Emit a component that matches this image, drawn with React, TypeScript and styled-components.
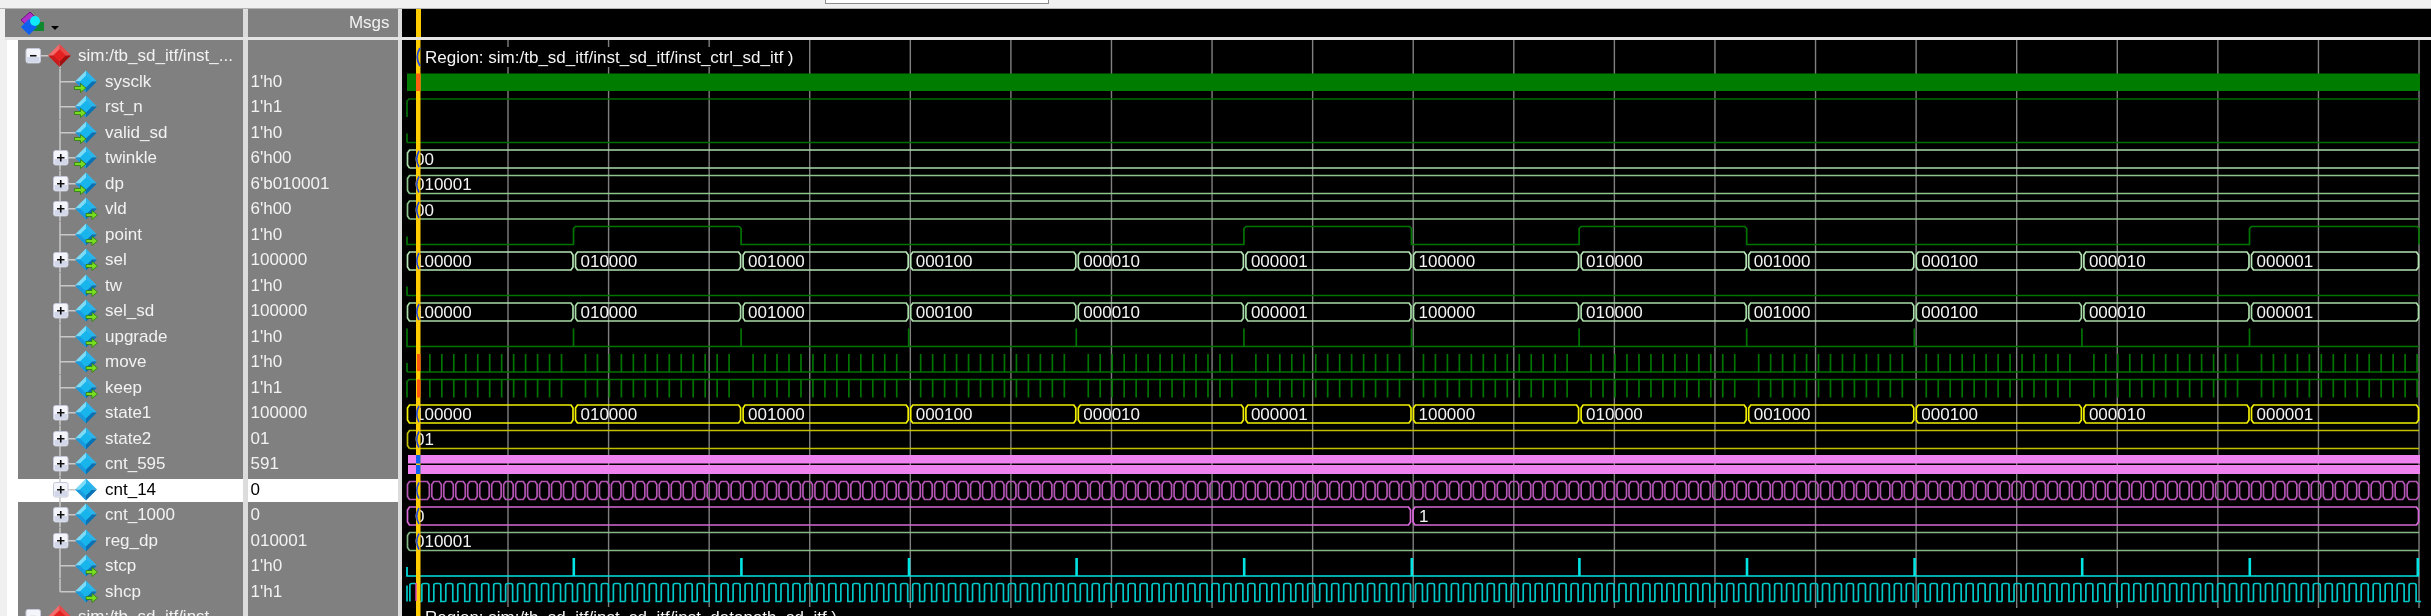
import React from "react";
import styled, { createGlobalStyle } from "styled-components";

type IconKind = "in" | "out" | "none";

type Signal = {
  name: string;
  value: string;
  icon: IconKind;
  expandable?: boolean;
};

const signals: Signal[] = [
  { name: "sysclk", value: "1'h0", icon: "in" },
  { name: "rst_n", value: "1'h1", icon: "in" },
  { name: "valid_sd", value: "1'h0", icon: "in" },
  { name: "twinkle", value: "6'h00", icon: "in", expandable: true },
  { name: "dp", value: "6'b010001", icon: "in", expandable: true },
  { name: "vld", value: "6'h00", icon: "out", expandable: true },
  { name: "point", value: "1'h0", icon: "out" },
  { name: "sel", value: "100000", icon: "out", expandable: true },
  { name: "tw", value: "1'h0", icon: "out" },
  { name: "sel_sd", value: "100000", icon: "out", expandable: true },
  { name: "upgrade", value: "1'h0", icon: "out" },
  { name: "move", value: "1'h0", icon: "out" },
  { name: "keep", value: "1'h1", icon: "out" },
  { name: "state1", value: "100000", icon: "none", expandable: true },
  { name: "state2", value: "01", icon: "none", expandable: true },
  { name: "cnt_595", value: "591", icon: "none", expandable: true },
  { name: "cnt_14", value: "0", icon: "none", expandable: true },
  { name: "cnt_1000", value: "0", icon: "none", expandable: true },
  { name: "reg_dp", value: "010001", icon: "none", expandable: true },
  { name: "stcp", value: "1'h0", icon: "out" },
  { name: "shcp", value: "1'h1", icon: "out" },
];

const START = 407;
const END = 2419;
const SEGMENT = 167.6;
const TICK = SEGMENT / 14;
const transitions = Array.from({ length: 11 }, (_, i) => 573.5 + SEGMENT * i);
const gridLines = Array.from({ length: 20 }, (_, i) => 508 + 100.58 * i);
const selValues = [
  "100000",
  "010000",
  "001000",
  "000100",
  "000010",
  "000001",
  "100000",
  "010000",
  "001000",
  "000100",
  "000010",
  "000001",
];

// wave rows are 18px tall, and sit on the same 25.5px pitch as the name list
const bottomOf = (row: number) => 91.5 + 25.5 * (row - 1);
const topOf = (row: number) => bottomOf(row) - 18;

const busCell = (x0: number, x1: number, row: number, closeRight = true) => {
  const t = topOf(row);
  const b = bottomOf(row);
  const left = `M${x0 + 2.5},${b} L${x0 + 0.5},${b - 3} V${t + 3} L${x0 + 2.5},${t}`;
  if (!closeRight) return `${left} H${x1} M${x0 + 2.5},${b} H${x1}`;
  return `${left} H${x1 - 2.5} L${x1 - 0.5},${t + 3} V${b - 3} L${x1 - 2.5},${b} Z`;
};

const busPath = (edges: number[], row: number, closeLast: boolean) => {
  const points = [START, ...edges, END];
  return points
    .slice(0, -1)
    .map((x, i) => {
      const last = i === points.length - 2;
      return busCell(i === 0 ? x : x + 1.5, points[i + 1], row, !last || closeLast);
    })
    .join(" ");
};

const startTick = (row: number) =>
  `M${START},${bottomOf(row)} V${topOf(row) + 9} M${START},${bottomOf(row)} H${END}`;

const pulseXs: number[] = [];
for (let x = 573.5 - TICK * 13; x < END; x += TICK) {
  if (!transitions.some((t) => Math.abs(t - x) < 3)) pulseXs.push(x);
}

const movePath =
  startTick(12) +
  pulseXs.map((x) => ` M${x},${bottomOf(12)} V${topOf(12)}`).join("");

const keepPath =
  `M${START},${bottomOf(13)} V${topOf(13) + 2} L${START + 2},${topOf(13)} H${END}` +
  pulseXs.map((x) => ` M${x},${topOf(13)} V${bottomOf(13)}`).join("");

const upgradePath =
  `M${START},${topOf(11)} V${bottomOf(11)} H${END}` +
  transitions.map((x) => ` M${x},${topOf(11)} V${bottomOf(11)}`).join("");

const highSegments: [number, number][] = [
  [transitions[0], transitions[1]],
  [transitions[4], transitions[5]],
  [transitions[6], transitions[7]],
  [transitions[10], END],
];

const pointPath = () => {
  let d = `M${START},${topOf(7) + 10} V${bottomOf(7)}`;
  highSegments.forEach(([a, b]) => {
    d += ` H${a} V${topOf(7) + 2} L${a + 2},${topOf(7)} H${b - 2} L${b},${topOf(7) + 2} V${bottomOf(7)}`;
  });
  return d;
};

const stcpPath = `M${START},${topOf(20) + 9} V${bottomOf(20)} H${END}`;

const shcpPath = () => {
  const top = topOf(21);
  const bottom = bottomOf(21);
  let d = `M${START},${bottom} V${top + 2}`;
  for (let x = 573.5 - TICK * 13 - 8; x < END - 8; x += TICK) {
    d += ` M${x},${bottom} V${top + 2} Q${x},${top} ${x + 2},${top} H${x + 5} Q${x + 7},${top} ${x + 7},${top + 2} V${bottom} H${x + TICK}`;
  }
  return d;
};

const cnt14Path = () => {
  const edges: number[] = [];
  for (let x = 573.5 - TICK * 12; x < END - 4; x += TICK) edges.push(x);
  return busPath(edges, 17, true);
};

const busRows = [4, 5, 6, 8, 10, 14, 15, 17, 18, 19];

const App = () => (
  <>
    <GlobalStyle />
    <Page>
      <TopStrip>
        <SearchBox />
      </TopStrip>
      <Header>
        <HeaderName>
          <LayersIcon />
        </HeaderName>
        <Sash />
        <HeaderValue>Msgs</HeaderValue>
        <Sash />
        <HeaderWave>
          <CursorStub />
        </HeaderWave>
      </Header>
      <HeaderRule />
      <Body>
        <Gutter>
          <NameList>
            <Row>
              <RootGlyph />
              <RootName>sim:/tb_sd_itf/inst_...</RootName>
            </Row>
            {signals.map((s, i) => (
              <Row key={s.name} $selected={s.name === "cnt_14"}>
                <SignalGlyph signal={s} last={i === signals.length - 1} />
                <SignalName $selected={s.name === "cnt_14"}>{s.name}</SignalName>
              </Row>
            ))}
            <Row>
              <RootGlyph />
              <RootName>sim:/tb_sd_itf/inst_...</RootName>
            </Row>
          </NameList>
        </Gutter>
        <Sash />
        <ValueList>
          <Row />
          {signals.map((s) => (
            <Row key={s.name} $selected={s.name === "cnt_14"}>
              <SignalValue $selected={s.name === "cnt_14"}>{s.value}</SignalValue>
            </Row>
          ))}
        </ValueList>
        <Sash />
        <WaveArea>
          <WaveChart />
        </WaveArea>
      </Body>
    </Page>
  </>
);

const LayersIcon = () => (
  <svg width="42" height="28" viewBox="18 9 42 28">
    <path d="M21,20 L30,12 L35,17 L26,25 Z" fill="#b030c8" stroke="#701080" />
    <rect x="33" y="22" width="11" height="9" fill="#108830" />
    <path d="M29,19 L37,27 L29,35 L21,27 Z" fill="#1060f0" />
    <circle cx="35" cy="21" r="5" fill="#10e8f8" />
    <path d="M51,26 H59 L55,30 Z" fill="#000" />
  </svg>
);

const Expander = ({ open }: { open?: boolean }) => {
  const x = open ? 26 : 53.5;
  return (
    <>
      <rect x={x} y="5.5" width="14.5" height="14.5" rx="2" fill="#f4f5fa" stroke="#c4c8d8" />
      <rect x={x + 1} y="14" width="12.5" height="5" fill="#d2d8ea" />
      <path
        d={
          open
            ? `M${x + 4},12.75 H${x + 10.5}`
            : `M${x + 3.5},12.75 H${x + 11} M${x + 7.25},9 V16.5`
        }
        stroke="#101010"
        strokeWidth="1.6"
      />
    </>
  );
};

const Diamond = ({ cx, r, colors }: { cx: number; r: number; colors: string[] }) => {
  const cy = 12.5;
  const inner = r * 0.55;
  return (
    <>
      <path d={`M${cx - r},${cy} L${cx},${cy - r} L${cx},${cy} Z`} fill={colors[0]} />
      <path d={`M${cx},${cy - r} L${cx + r},${cy} L${cx},${cy} Z`} fill={colors[1]} />
      <path d={`M${cx - r},${cy} L${cx},${cy + r} L${cx},${cy} Z`} fill={colors[2]} />
      <path d={`M${cx},${cy + r} L${cx + r},${cy} L${cx},${cy} Z`} fill={colors[3]} />
      <path
        d={`M${cx - inner},${cy} L${cx},${cy - inner} L${cx + inner},${cy} L${cx},${cy + inner} Z`}
        fill={colors[4]}
      />
    </>
  );
};

const blueFacets = ["#7adcf8", "#2ab4ec", "#1a9ade", "#0a72b4", "#18b4ec"];
const redFacets = ["#f46a6a", "#e84848", "#c81c1c", "#a01010", "#e42020"];

const SignalArrow = ({ x }: { x: number }) => (
  <path
    d={`M${x},17.5 h6 v-3 l5.5,4.5 l-5.5,4.5 v-3 h-6 Z`}
    fill="#78dc20"
    stroke="#2c7a10"
    strokeWidth="0.8"
  />
);

const RootGlyph = () => (
  <GlyphSvg width="87" height="25.5" viewBox="18 0 87 25.5">
    <path d="M60,12.75 V25.5 M40,12.75 H50" stroke="#c8c8c8" strokeWidth="1.5" fill="none" />
    <Expander open />
    <Diamond cx={59.5} r={11.5} colors={redFacets} />
  </GlyphSvg>
);

const SignalGlyph = ({ signal, last }: { signal: Signal; last: boolean }) => (
  <GlyphSvg width="87" height="25.5" viewBox="18 0 87 25.5">
    <path
      d={`M60,0 V${last ? 12.75 : 25.5} M60,12.75 H76`}
      stroke="#c8c8c8"
      strokeWidth="1.5"
      fill="none"
    />
    {signal.expandable && <Expander />}
    <Diamond cx={86} r={11} colors={blueFacets} />
    {signal.icon === "in" && <SignalArrow x={74.5} />}
    {signal.icon === "out" && <SignalArrow x={86} />}
  </GlyphSvg>
);

const WaveChart = () => (
  <WaveSvg width="2029" height="576" viewBox="402 40 2029 576">
    {gridLines.map((x) => (
      <line key={x} x1={x} x2={x} y1="40" y2="608" stroke="#808080" strokeWidth="1.4" />
    ))}

    <RegionBackdrop x="421" y="47" width="370" height="20" />
    <WaveText x="425" y="62.5">Region: sim:/tb_sd_itf/inst_sd_itf/inst_ctrl_sd_itf )</WaveText>
    <RegionBackdrop x="421" y="607" width="420" height="9" />
    <WaveText x="425" y="623">Region: sim:/tb_sd_itf/inst_sd_itf/inst_datapath_sd_itf )</WaveText>

    <rect x={START} y={topOf(1)} width={END - START + 1} height="17.5" fill="#007c00" />
    <Trace d={`M${START},${topOf(2) + 18} V${topOf(2) + 2} L${START + 2},${topOf(2)} H${END}`} stroke="#006e00" />
    <Trace d={startTick(3)} stroke="#006e00" />

    <Trace d={busPath([], 4, false)} stroke="#a8dca8" />
    <Trace d={busPath([], 5, false)} stroke="#8cc48c" />
    <Trace d={busPath([], 6, false)} stroke="#8cc48c" />
    <Trace d={pointPath()} stroke="#007400" />
    <Trace d={busPath(transitions, 8, true)} stroke="#b4e4b4" />
    <Trace d={startTick(9)} stroke="#007400" />
    <Trace d={busPath(transitions, 10, true)} stroke="#a8dca8" />
    <Trace d={upgradePath} stroke="#007400" />
    <Trace d={movePath} stroke="#007400" />
    <Trace d={keepPath} stroke="#007400" />
    <Trace d={busPath(transitions, 14, true)} stroke="#f0f000" />
    <Trace d={busPath([], 15, false)} stroke="#c0c000" />

    <rect x={START + 1} y="455" width={END - START} height="8.5" fill="#ee82ee" />
    <rect x={START + 1} y="465" width={END - START} height="9" fill="#ee82ee" />

    <Trace d={cnt14Path()} stroke="#b455b4" />
    <Trace d={busPath([1411], 18, true)} stroke="#d868d8" />
    <Trace d={busPath([], 19, false)} stroke="#84b884" />
    <Trace d={stcpPath} stroke="#00e4e4" />
    {[...transitions, END - 1.5].map((x) => (
      <rect key={x} x={x - 1} y={topOf(20)} width="2.6" height="18" fill="#00e4e4" />
    ))}
    <Trace d={shcpPath()} stroke="#00c8c8" />

    {[4, 5, 6].map((row, i) => (
      <WaveText key={row} x="415" y={bottomOf(row) - 3.5}>
        {["00", "010001", "00"][i]}
      </WaveText>
    ))}
    {[8, 10, 14].map((row) =>
      selValues.map((v, i) => (
        <WaveText key={`${row}-${i}`} x={i === 0 ? 415 : transitions[i - 1] + 7} y={bottomOf(row) - 3.5}>
          {v}
        </WaveText>
      )),
    )}
    <WaveText x="415" y={bottomOf(15) - 3.5}>01</WaveText>
    <WaveText x="415" y={bottomOf(18) - 3.5}>0</WaveText>
    <WaveText x="1419" y={bottomOf(18) - 3.5}>1</WaveText>
    <WaveText x="415" y={bottomOf(19) - 3.5}>010001</WaveText>

    <rect x="416" y="40" width="4.5" height="576" fill="#ffcc00" />
    <rect x="416" y={topOf(1)} width="4.5" height="17.5" fill="#ff6010" />
    <rect x="417" y={topOf(12)} width="3.5" height="17" fill="#ff5a10" />
    <rect x="417" y={topOf(13)} width="3.5" height="18" fill="#ff5a10" />
    <rect x="416" y="455" width="4.5" height="8.5" fill="#1060f0" />
    <rect x="416" y="465" width="4.5" height="9" fill="#1060f0" />
    <path d="M416,601 V583" stroke="#e040c0" strokeWidth="1.4" />
    {busRows.map((row) => (
      <path
        key={row}
        d={`M419,${topOf(row) + 1} Q414.5,${topOf(row) + 9} 419,${bottomOf(row) - 1}`}
        fill="none"
        stroke="#2048e0"
        strokeWidth="1.6"
      />
    ))}
    <path d="M420,48 Q414.5,57 420,66" fill="none" stroke="#2048e0" strokeWidth="1.8" />
  </WaveSvg>
);

const GlobalStyle = createGlobalStyle`
  html, body {
    margin: 0;
    padding: 0;
    background: #f0f0f0;
    overflow: hidden;
  }
`;

const Page = styled.div`
  width: 2431px;
  height: 616px;
  display: flex;
  flex-direction: column;
  overflow: hidden;
  font-family: "Liberation Sans", Arial, sans-serif;
  font-size: 17px;
  filter: blur(0.3px);
`;

const TopStrip = styled.div`
  height: 8px;
  flex: none;
  background: #f0f0f0;
  border-bottom: 1px solid #b4b4b4;
  position: relative;
`;

const SearchBox = styled.div`
  position: absolute;
  left: 825px;
  top: -4px;
  width: 222px;
  height: 6px;
  background: #fff;
  border: 1px solid #8c8c8c;
`;

const Header = styled.div`
  height: 28px;
  flex: none;
  display: flex;
  padding-left: 5px;
`;

const HeaderName = styled.div`
  width: 238px;
  flex: none;
  box-sizing: border-box;
  background: #808080;
  padding-left: 13px;
`;

const Sash = styled.div`
  width: 4.5px;
  flex: none;
  background: #dcdcdc;
`;

const HeaderValue = styled.div`
  width: 150px;
  flex: none;
  box-sizing: border-box;
  background: #808080;
  color: #f2f2f2;
  line-height: 28px;
  text-align: right;
  padding-right: 8px;
`;

const HeaderWave = styled.div`
  flex: 1;
  background: #000;
  padding-left: 14px;
`;

const CursorStub = styled.div`
  width: 4.5px;
  height: 100%;
  background: #ffcc00;
`;

const HeaderRule = styled.div`
  height: 3px;
  flex: none;
  margin-left: 5px;
  background: #e4e4e4;
`;

const Body = styled.div`
  height: 576px;
  flex: none;
  display: flex;
  overflow: hidden;
`;

const Gutter = styled.div`
  width: 236px;
  flex: none;
  margin-left: 7px;
  padding-left: 11px;
  box-sizing: border-box;
  background: #fff;
`;

const NameList = styled.div`
  height: 100%;
  background: #808080;
  padding-top: 3.25px;
  box-sizing: border-box;
  overflow: hidden;
`;

const ValueList = styled.div`
  width: 150px;
  flex: none;
  background: #808080;
  padding-top: 3.25px;
  box-sizing: border-box;
  overflow: hidden;
`;

const Row = styled.div<{ $selected?: boolean }>`
  height: 25.5px;
  display: flex;
  align-items: center;
  background: ${({ $selected }) =>
    $selected
      ? "linear-gradient(#808080 2px, #fff 2px, #fff 25px, #d8d8d8 25px)"
      : "transparent"};
`;

const GlyphSvg = styled.svg`
  flex: none;
  display: block;
`;

const SignalName = styled.span<{ $selected?: boolean }>`
  color: ${({ $selected }) => ($selected ? "#000" : "#f2f2f2")};
  white-space: nowrap;
`;

const RootName = styled.span`
  color: #f2f2f2;
  white-space: nowrap;
  margin-left: -27px;
`;

const SignalValue = styled.span<{ $selected?: boolean }>`
  color: ${({ $selected }) => ($selected ? "#000" : "#f2f2f2")};
  padding-left: 3px;
  white-space: nowrap;
`;

const WaveArea = styled.div`
  flex: 1;
  background: #000;
  overflow: hidden;
`;

const WaveSvg = styled.svg`
  display: block;
`;

const Trace = styled.path`
  fill: none;
  stroke-width: 1.7;
`;

const WaveText = styled.text`
  fill: #f4f4f4;
  font-family: "Liberation Sans", Arial, sans-serif;
  font-size: 17px;
`;

const RegionBackdrop = styled.rect`
  fill: #000;
`;

export default App;
